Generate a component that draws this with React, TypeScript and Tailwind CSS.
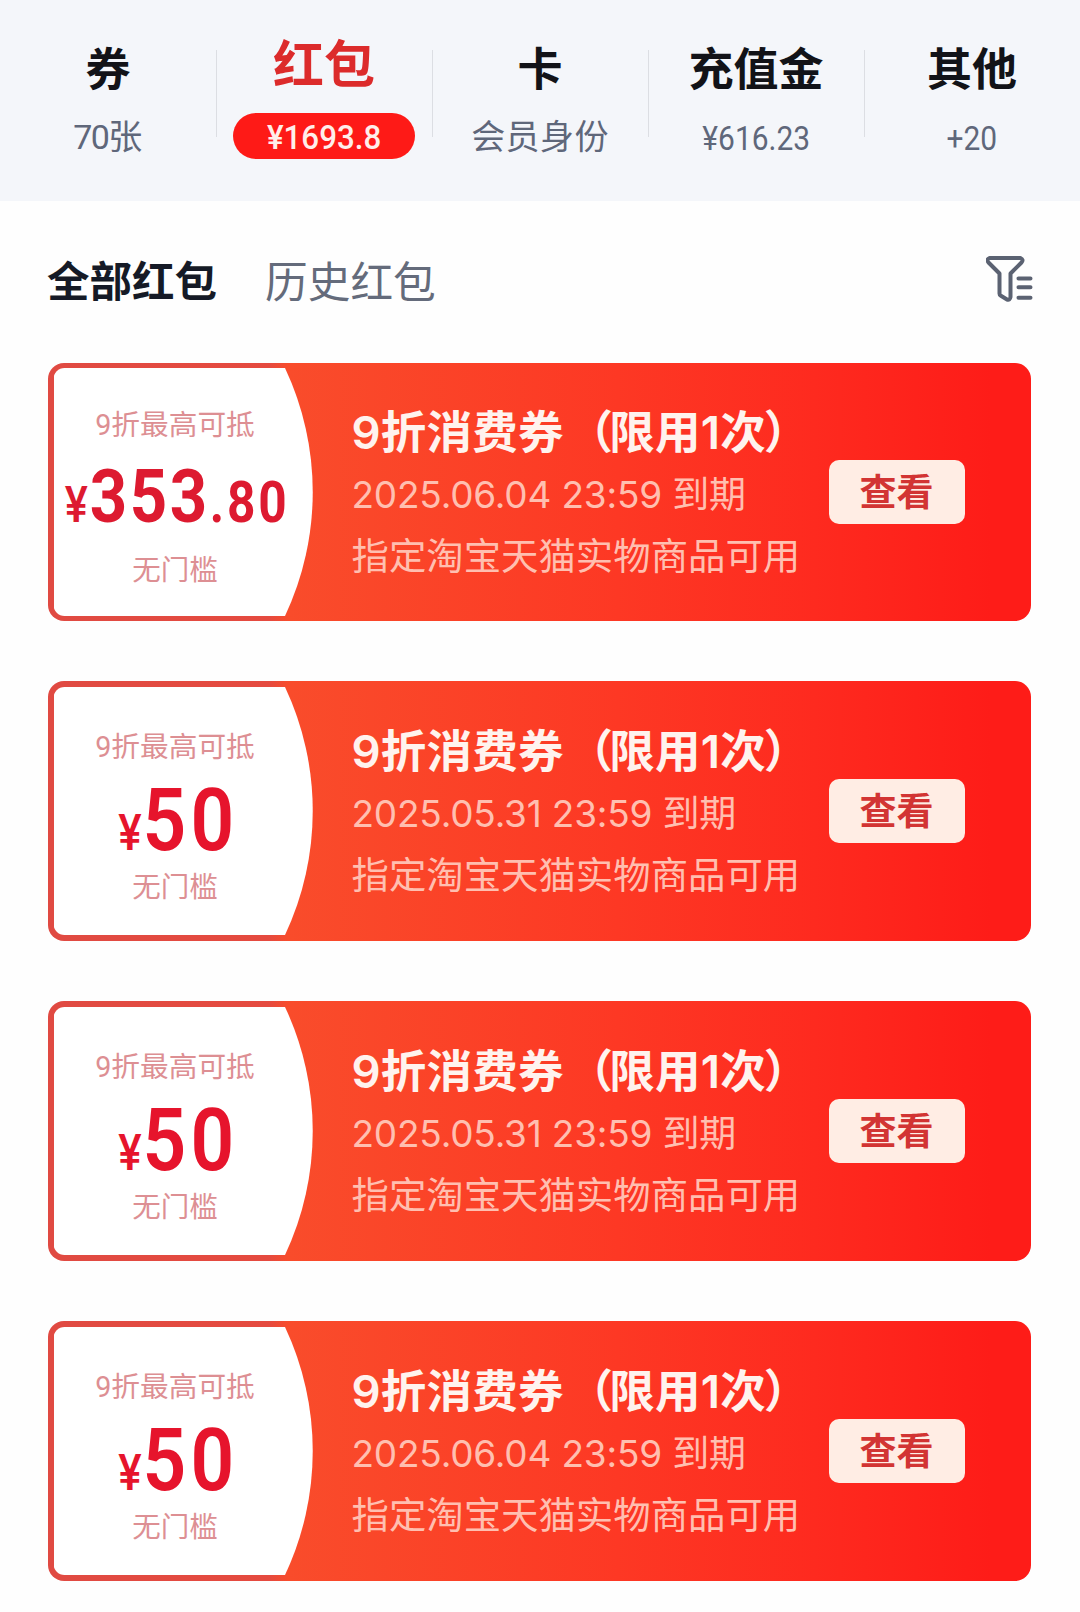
interface Tab {
    title: string;
    sub: string;
    active?: boolean;
    subClass?: string;
}

interface Coupon {
    whole: string;
    fraction?: string;
    expires: string;
}

const tabs: Tab[] = [
    { title: "券", sub: "70张", subClass: "mt-[14px] mr-[2px] tracking-[-1.5px]" },
    { title: "红包", sub: "¥1693.8", active: true },
    { title: "卡", sub: "会员身份", subClass: "mt-[14px] tracking-[0.4px]" },
    { title: "充值金", sub: "¥616.23", subClass: "mt-[15px] scale-x-[0.88]" },
    { title: "其他", sub: "+20", subClass: "mt-[15px] scale-x-[0.88]" },
];

const coupons: Coupon[] = [
    { whole: "353", fraction: ".80", expires: "2025.06.04 23:59" },
    { whole: "50", expires: "2025.05.31 23:59" },
    { whole: "50", expires: "2025.05.31 23:59" },
    { whole: "50", expires: "2025.06.04 23:59" },
];

function FilterIcon() {
    return (
        <svg
            width="48"
            height="48"
            viewBox="0 0 48 48"
            fill="none"
            stroke="#5b6272"
            strokeWidth="4"
            strokeLinecap="round"
            strokeLinejoin="round"
        >
            <path d="M3.5 3H34.5Q38 4.5 35.5 7.5L24.5 18.5V42Q24 45.5 21 44.5L14.5 40.5Q13.5 40 13.5 38.5V18.5L2.5 7.5Q0 4.5 3.5 3Z" />
            <path d="M32.5 23.5H44.5M32.5 32.3H44.5M32.5 42.7H44.5" />
        </svg>
    );
}

function TopTab({ tab }: { tab: Tab }) {
    if (tab.active) {
        return (
            <div className="flex w-[216px] flex-col items-center">
                <span className="mt-[33px] h-[66px] text-[51px] leading-[66px] font-bold whitespace-nowrap text-[#dc2b2b]">
                    {tab.title}
                </span>
                <span className="mt-[14px] flex h-[46px] w-[182px] justify-center rounded-full bg-[#fe1a17] text-[34px] leading-[49px] font-medium text-[#ffeeea]">
                    <span className="scale-x-[0.92]">{tab.sub}</span>
                </span>
            </div>
        );
    }
    return (
        <div className="flex w-[216px] flex-col items-center">
            <span className="mt-[41px] h-[60px] text-[45px] leading-[60px] font-bold whitespace-nowrap text-[#121318]">
                {tab.title}
            </span>
            <span className={`${tab.subClass} h-[44px] text-[34px] leading-[44px] whitespace-nowrap text-[#5f677a]`}>
                {tab.sub}
            </span>
        </div>
    );
}

function CouponCard({ coupon }: { coupon: Coupon }) {
    return (
        <div
            className={`${coupon.fraction ? "h-[258px] py-[5px]" : "h-[260px] py-[6px]"} flex w-[983px] rounded-[16px] bg-[linear-gradient(90deg,#e04a42_0%,#e54a3f_22.5%,#f94c2b_24.5%,#fd3824_58%,#fe2a1f_78%,#fe1c18_96%)] px-[5.5px]`}
        >
            <div className="flex h-[248px] w-[259px] shrink-0 flex-col items-center bg-white pr-[16px] [clip-path:path('M11_0H231.500A291_291_0_0_1_231.500_248H11A11_11_0_0_1_0_237V11A11_11_0_0_1_11_0Z')]">
                <span
                    className={`${coupon.fraction ? "mt-[37px]" : "mt-[40px]"} h-[40px] text-[28.7px] leading-[40px] whitespace-nowrap text-[#dd8f93]`}
                >
                    9折最高可抵
                </span>
                {coupon.fraction ? (
                    <div className="mt-[13px] ml-[5px] flex h-[77px] scale-x-[0.87] items-baseline leading-[77px] font-bold whitespace-nowrap text-[#dd1a30]">
                        <span className="text-[50px] font-medium tracking-[2px]">¥</span>
                        <span className="text-[75px] tracking-[3px]">{coupon.whole}</span>
                        <span className="text-[57px] tracking-[3.3px]">{coupon.fraction}</span>
                    </div>
                ) : (
                    <div className="mt-[10px] ml-[6px] flex h-[86px] scale-x-[0.88] items-baseline leading-[86px] font-semibold whitespace-nowrap text-[#e6142c]">
                        <span className="text-[50px] font-medium tracking-[1px]">¥</span>
                        <span className="text-[87px] tracking-[4.8px]">{coupon.whole}</span>
                    </div>
                )}
                <span
                    className={`${coupon.fraction ? "mt-[16px]" : "mt-[5px]"} h-[40px] text-[28.5px] leading-[40px] whitespace-nowrap text-[#dd8f93]`}
                >
                    无门槛
                </span>
            </div>
            <div className="ml-[39px] flex w-[477px] shrink-0 flex-col font-[Inter,'Noto_Sans_CJK_SC',sans-serif]">
                <span className="mt-[33.5px] h-[62px] text-[45.5px] leading-[62px] font-semibold tracking-[0.2px] whitespace-nowrap text-[#fff3ee]">
                    9折消费券
                    <span className="relative left-[4px]">（</span>
                    限用1次
                    <span className="relative left-[-2px]">）</span>
                </span>
                <span className="h-[62px] text-[37px] leading-[62px] tracking-[-0.2px] whitespace-nowrap text-[#ffbfb0]">
                    {coupon.expires} 到期
                </span>
                <span className="h-[62px] text-[37.4px] leading-[62px] whitespace-nowrap text-[#ffbfb0]">
                    指定淘宝天猫实物商品可用
                </span>
            </div>
            <button className="mt-[92px] h-[64px] w-[136px] shrink-0 rounded-[10px] bg-[#ffede4] pt-[3px] text-center text-[37px] leading-[61px] font-bold text-[#d23433]">
                查看
            </button>
        </div>
    );
}

export default function App() {
    return (
        <div className="h-[1612px] w-[1080px] overflow-hidden bg-[#fefefe] font-[Roboto,'Noto_Sans_CJK_SC',sans-serif]">
            <header className="flex h-[201px] bg-[#f4f6fa]">
                {tabs.map((tab, i) => (
                    <div key={tab.title} className="flex">
                        {i > 0 && <div className="mt-[50px] -mr-px h-[87px] w-px bg-[#dcdee3]" />}
                        <TopTab tab={tab} />
                    </div>
                ))}
            </header>
            <nav className="flex h-[162px] items-start pr-[46px] pl-[47px]">
                <span className="mt-[52px] text-[42.5px] leading-[60px] font-bold text-[#151a26]">全部红包</span>
                <span className="mt-[52px] ml-[48px] text-[42.7px] leading-[60px] text-[#646b7b]">历史红包</span>
                <button className="mt-[54px] ml-auto">
                    <FilterIcon />
                </button>
            </nav>
            <main className="flex flex-col gap-[60px] pl-[48px]">
                {coupons.map((coupon, i) => (
                    <CouponCard key={i} coupon={coupon} />
                ))}
            </main>
        </div>
    );
}
